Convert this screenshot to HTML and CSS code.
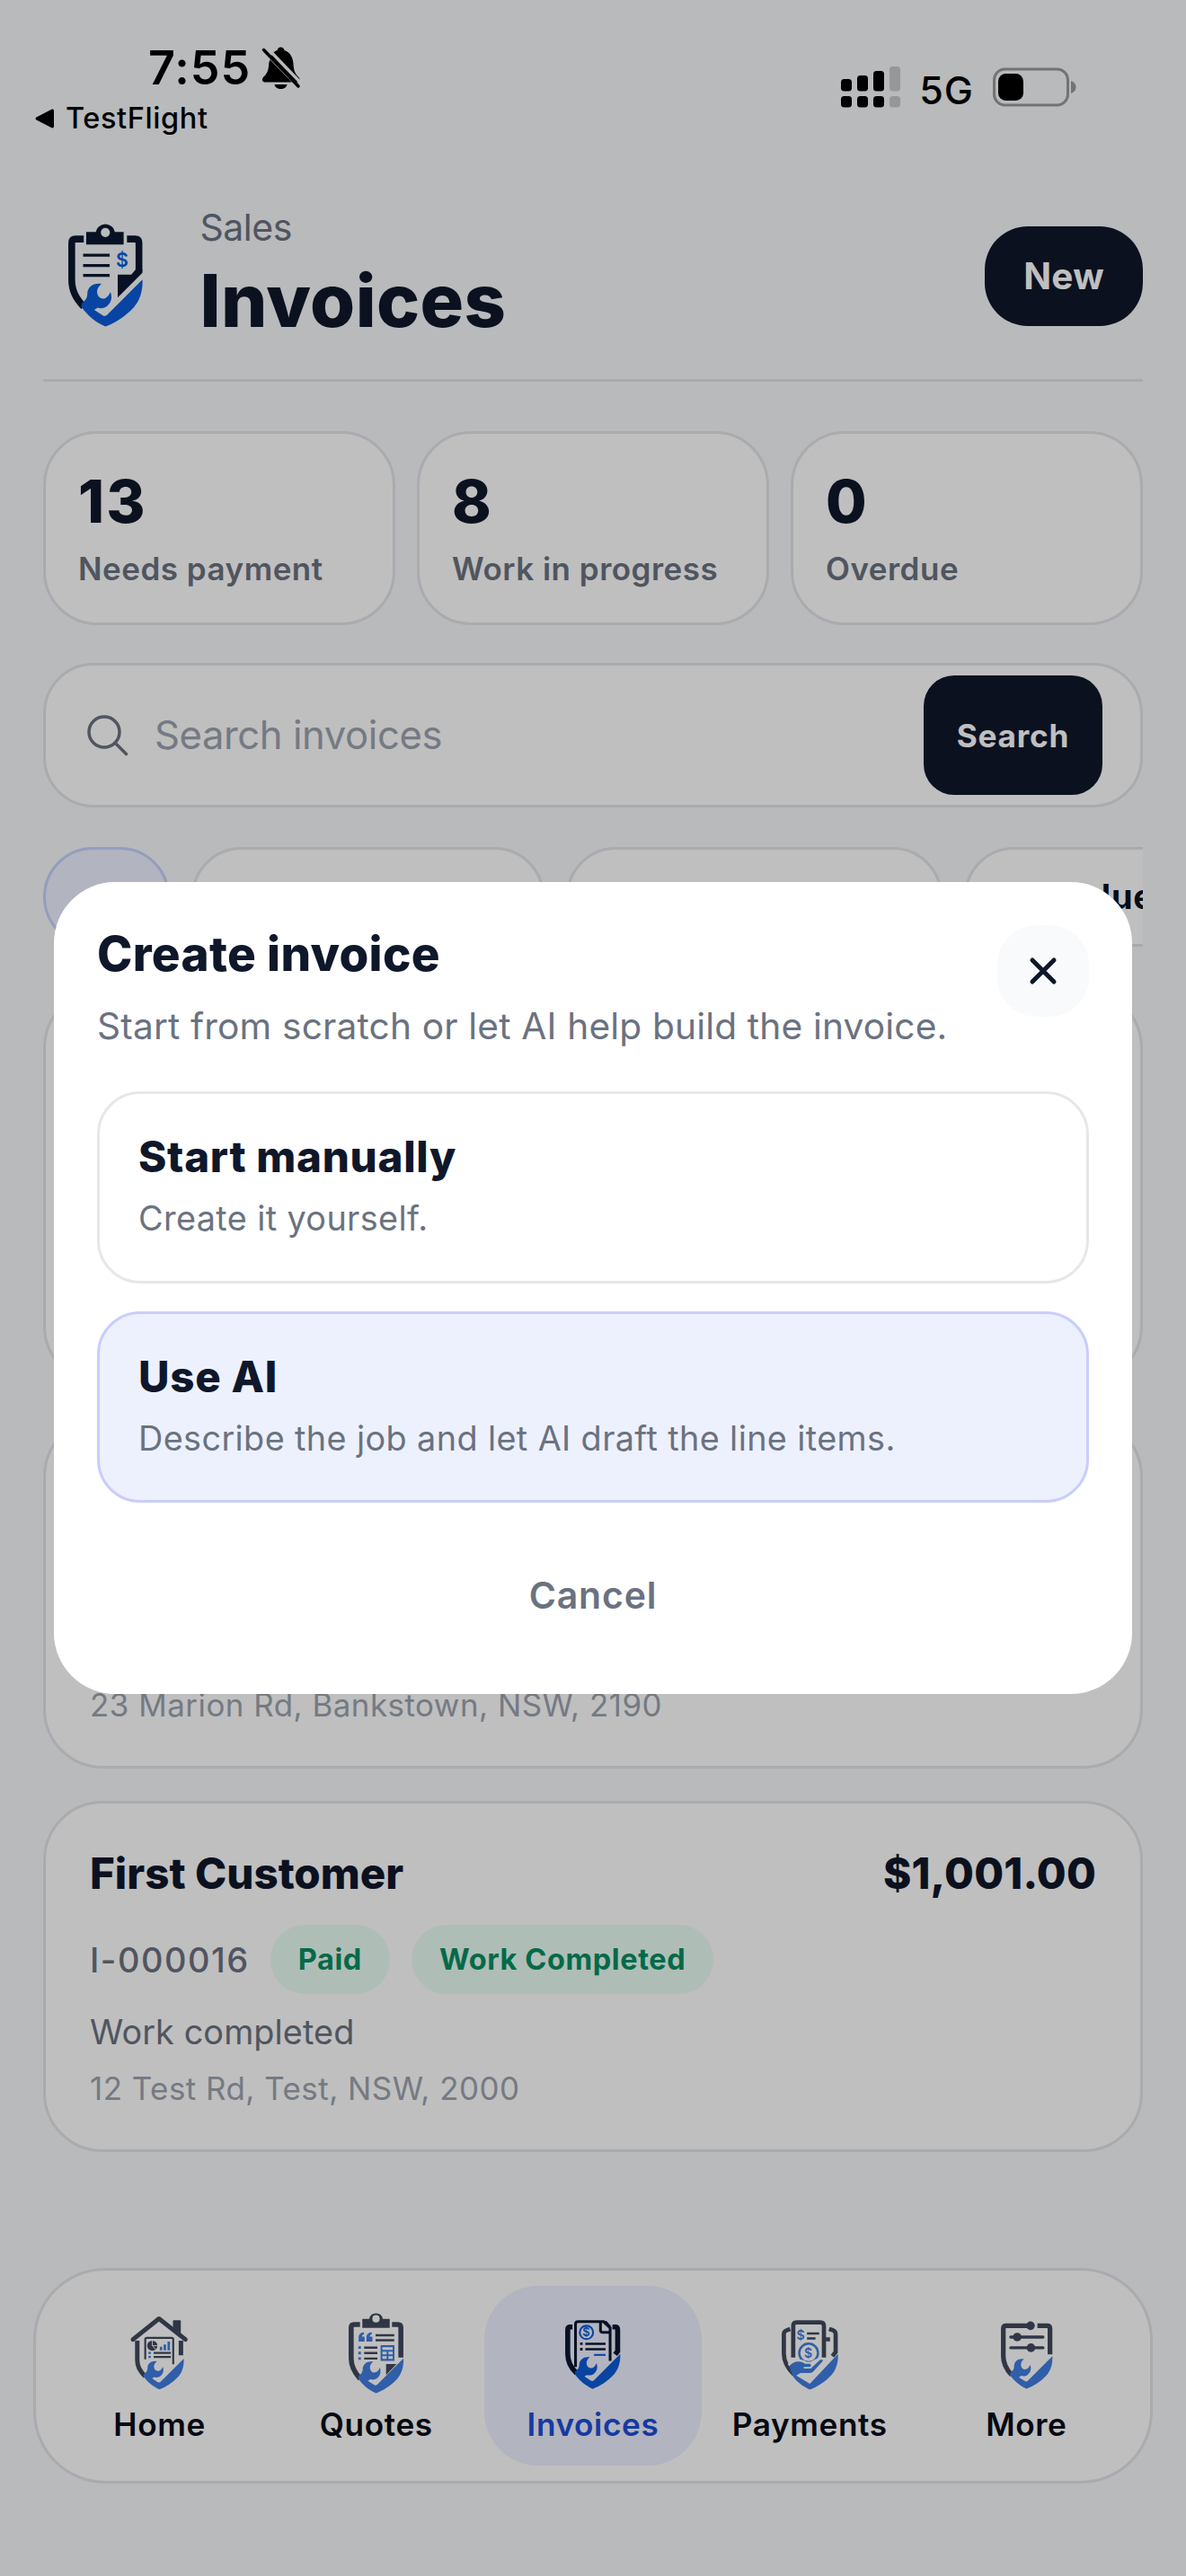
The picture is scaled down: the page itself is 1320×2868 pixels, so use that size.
FILE: index.html
```html
<!DOCTYPE html>
<html lang="en">
<head>
<meta charset="utf-8">
<title>Invoices</title>
<link rel="stylesheet" href="styles.css">
</head>
<body>
<svg class="defs" aria-hidden="true">
  <defs>
    <path id="swoosh" d="M60 0C60.5 9 58 17 53 22.500C46 30 38 35 30 38C22 34.500 16 29.500 10.500 22L11 19C14 17 15.400 15 15.400 12C15.400 6 20 2.500 26.800 3.400C24 6 22.800 8.500 23.500 11.500C24.300 14.500 27 16.300 30 15C32.200 14 33.300 12 34.100 10C36 15 34.500 19 31.300 21.600C28.500 23.500 26 23.400 23.800 22.800L21 24.500L28 29C29 29.800 30.500 29.500 31.500 28.500Z"/>
  </defs>
</svg>
<div class="screen">
  <header class="status">
    <div class="status-left">
      <div class="clock">7:55
        <svg class="bell" width="44" height="48" viewBox="0 0 44 48">
          <path d="M9.500 14.500C11 8.500 14 5 17.500 4C18 1.500 20 .5 21.500 .5S25 1.500 25.500 4C32 6 35 12 35.500 19C36 28 38 30.500 41.500 34C43.500 37 42.500 39.500 39 39.500H4.500C1 39.500 0 37 2 34C6.500 30 8 26 8.300 18Z"/>
          <path d="M14.500 42H28.500C28 45.500 25 47 21.500 47S15 45.500 14.500 42Z"/>
          <path class="slash-gap" d="M2 4L42 45.500M6 1L46 42.500"/>
          <path class="slash" d="M2.500 3.500L41 44"/>
        </svg>
      </div>
      <div class="back">
        <svg width="22" height="22" viewBox="0 0 22 22"><path d="M1.500 9.500L18.500 .8Q21 0 21 2.500V19.500Q21 22 18.500 21.200L1.500 12.500Q-.5 11 1.500 9.500Z"/></svg>
        TestFlight
      </div>
    </div>
    <div class="status-right">
      <svg width="67" height="46" viewBox="0 0 67 46">
        <g fill="#000"><rect x="0" y="14" width="12" height="13.500" rx="3.500"/><rect x="18" y="10" width="12" height="17.500" rx="3.500"/><rect x="36" y="5" width="12" height="22.500" rx="3.500"/><rect x="0" y="33" width="12" height="12.500" rx="3.500"/><rect x="18" y="33" width="12" height="12.500" rx="3.500"/><rect x="36" y="33" width="12" height="12.500" rx="3.500"/></g>
        <g class="dim"><rect x="54" y="0" width="12" height="27.500" rx="3.500"/><rect x="54" y="33" width="12" height="12.500" rx="3.500"/></g>
      </svg>
      <span class="network">5G</span>
      <svg class="battery" width="94" height="44" viewBox="0 0 94 44">
        <rect class="shell" x="1.500" y="2" width="82" height="40" rx="12"/>
        <rect x="6" y="7" width="28" height="30" rx="8.500"/>
        <path class="dim-dark" d="M87 15Q92.500 17 92.500 22T87 29Z"/>
      </svg>
    </div>
  </header>

  <main class="content">
    <section class="header">
      <svg class="logo" width="82.500" height="115.500" viewBox="0 -46 60 84">
        <g class="navy-line"><path d="M12.500 -32.800H6Q2.800 -32.800 2.800 -29.600V0C2.800 9 6 15 12.500 22"/><path d="M47.500 -32.800H54Q57.200 -32.800 57.200 -29.600V-7"/></g>
        <path class="navy" fill-rule="evenodd" d="M14.500 -38.500H22.400A7.700 7.700 0 0 1 37.600 -38.500H44.800V-28.400H14.500ZM30 -41.800A3.700 3.700 0 1 0 30 -34.400A3.700 3.700 0 1 0 30 -41.800Z"/>
        <path class="navy" d="M40 -4H51L54.400 -8H60V-5.500L40 14.500Z"/>
        <path class="thin" d="M12 -19.800H33.500M12 -11.400H33.500M12 -3.400H33.500"/>
        <text class="dollar" x="43.500" y="-10.500" font-size="15.500">$</text>
        <use class="blue" href="#swoosh"/>
      </svg>
      <div class="titles">
        <div class="eyebrow">Sales</div>
        <h1>Invoices</h1>
      </div>
      <button class="new">New</button>
    </section>

    <section class="stats">
      <div class="stat"><b>13</b><span>Needs payment</span></div>
      <div class="stat"><b>8</b><span>Work in progress</span></div>
      <div class="stat"><b>0</b><span>Overdue</span></div>
    </section>

    <section class="search">
      <svg width="48" height="48" viewBox="0 0 48 48"><circle cx="20" cy="20" r="17"/><path d="M32 32L44.500 44.500"/></svg>
      <span class="placeholder">Search invoices</span>
      <button>Search</button>
    </section>

    <section class="filters">
      <div class="filter all"></div>
      <div class="filter pending"></div>
      <div class="filter progress"></div>
      <div class="filter overdue">Overdue</div>
    </section>

    <section class="cards">
      <article class="card tall"></article>
      <article class="card"><div class="address">23 Marion Rd, Bankstown, NSW, 2190</div></article>
      <article class="card">
        <div class="card-top"><h2>First Customer</h2><h2 class="amount">$1,001.00</h2></div>
        <div class="tags"><span class="number">I-000016</span><span class="tag">Paid</span><span class="tag">Work Completed</span></div>
        <div class="summary">Work completed</div>
        <div class="address">12 Test Rd, Test, NSW, 2000</div>
      </article>
    </section>
  </main>

  <nav class="tabs">
    <a class="tab">
      <svg width="68.800" height="83.300" viewBox="-8 -54 76 92">
        <g class="navy-line"><path d="M2.800 -22V2C2.800 10 6 15 12.500 22"/><path d="M56.500 -22V-4"/><path class="round" d="M-2.500 -23.500L29.500 -49L62 -23.500"/></g>
        <path class="navy" d="M46.700 -46Q46.700 -47 47.700 -47H55.300Q56.300 -47 56.300 -46V-25L46.700 -33Z"/>
        <path class="thin" d="M12.600 1V-23.500Q12.600 -25.500 14.600 -25.500H45Q47 -25.500 47 -23.500V7M23 -7H44M23 -2H44"/>
        <circle class="navy" cx="21.300" cy="-15.800" r="6.300"/><path class="cut" d="M21.300 -22.500V-15.800H28M21.300 -15.800L26 -11"/>
        <path class="bluefill" d="M30.500 -14.400H33.500V-10H30.500ZM35.200 -17.300H38.200V-10H35.200ZM40 -21H43V-10H40ZM16.500 -8.300H19.500V-5.700H16.500ZM16.500 -3.300H19.500V-.7H16.500Z"/>
        <use class="blue" href="#swoosh"/>
      </svg>
      <span>Home</span>
    </a>
    <a class="tab">
      <svg class="drop" width="61" height="90.500" viewBox="0 -51 60 89">
        <g class="navy-line"><path d="M12.500 -37.200H6Q2.800 -37.200 2.800 -34V0C2.800 9 6 15 12.500 22"/><path d="M47.500 -37.200H54Q57.200 -37.200 57.200 -34V-1"/></g>
        <path class="navy" fill-rule="evenodd" d="M15 -43.500H22.500A7.700 7.700 0 0 1 37.500 -43.500H45V-33.500H15ZM30 -47.500A4 4 0 1 0 30 -39.500A4 4 0 1 0 30 -47.500Z"/>
        <path class="navy" d="M41 6H52.500L41 18Z"/>
        <path class="thin" d="M29.500 -25.500H50M29.500 -20H50M17 -12H31.500M17 -6H31.500M17 0H31.500"/>
        <path class="bluefill" d="M11 -23.500Q11 -28 16.500 -29L17 -27Q14.500 -26 14.500 -24H17.500V-18.500H11ZM19.500 -23.500Q19.500 -28 25 -29L25.500 -27Q23 -26 23 -24H26V-18.500H19.500ZM10.700 -13.400H13.500V-10.600H10.700ZM10.700 -7.400H13.500V-4.600H10.700ZM10.700 -1.400H13.500V1.400H10.700Z"/>
        <path class="blueline" d="M36 -13.500H49.200V1.500H36ZM36 -8.500H49.200M36 -3.500H49.200M42.600 -8.500V1.500"/>
        <use class="blue" href="#swoosh"/>
      </svg>
      <span>Quotes</span>
    </a>
    <a class="tab active">
      <svg width="61.300" height="77.700" viewBox="0 -38 60 76">
        <g class="navy-line"><path d="M8 -29.500H5.500Q2.800 -29.500 2.800 -26.500V0C2.800 9 6 15 12.500 21"/><path d="M51.500 -29.500H54.500Q57.200 -29.500 57.200 -26.500V-3L54.500 .5"/></g>
        <path class="doc" d="M11.300 14V-32.500Q11.300 -35.300 14.200 -35.300H42L49 -28.500V7.500M38.500 -35V-26Q38.500 -23.500 41 -23.500H49"/>
        <path class="navy" d="M40 -35L49.500 -26.500V-31L45 -36Z"/>
        <circle class="blueline" cx="23.200" cy="-23.500" r="7.300"/>
        <text class="dollar" x="23.200" y="-19" font-size="12.500">$</text>
        <path class="thin" d="M22 -11.200H44M22 -5.200H44"/>
        <path class="navy" d="M16.300 -12.600H19V-9.800H16.300ZM16.300 -6.600H19V-3.800H16.300Z"/>
        <path class="blueline" d="M31.500 1H44"/>
        <use class="blue" href="#swoosh"/>
      </svg>
      <span>Invoices</span>
    </a>
    <a class="tab">
      <svg width="62.700" height="79.400" viewBox="0 -38 60 76">
        <g class="navy-line four"><path d="M9 -26.500L5 -25Q2.300 -24 2.300 -21V0C2.300 9 6 15 13 22"/><path d="M50.500 -26.500L55 -25Q57.500 -24 57.500 -21V-2L54 2.500M47 -15.500H51.500"/><path d="M12.300 4V-30Q12.300 -33.500 16 -33.500H41Q45 -33.500 45 -30V4"/></g>
        <text class="dollar" x="20.500" y="-15" font-size="13.500">$</text>
        <path class="thin" d="M27 -21.800H40M27 -16.500H36"/>
        <circle class="blueline wide" cx="28.700" cy="-1" r="10"/>
        <text class="dollar" x="28.700" y="3.700" font-size="13.500">$</text>
        <path class="hand-gap" d="M8 13Q14 8 20 8.500Q24 9 26 11H31L41 6"/>
        <path class="blue" d="M8 13.500C12 8 18 7.500 22 9L25 10.500H30Q32.500 12 30 14H23.500V15.500H31L40.500 6.800Q43.500 5 44 7.500L34 18.500Q32.500 20.300 30 20.300H20L15.500 23L30 32L60 0C60.500 9 58 17 53 22.500C46 30 38 35 30 38C22 34.500 16 29.500 12 24Z"/>
      </svg>
      <span>Payments</span>
    </a>
    <a class="tab">
      <svg width="57.300" height="74.600" viewBox="0 -40 60 78">
        <g class="navy-line"><path d="M34 -35.500H6Q2.800 -35.500 2.800 -32.300V0C2.800 9 6 15 12.500 22"/><path d="M42.500 -35.500H54Q57.200 -35.500 57.200 -32.300V-2"/></g>
        <path class="thin mid" d="M11.500 -22.300H49M11.500 -9.800H49"/>
        <g class="navy"><circle cx="34.500" cy="-35.500" r="5"/><circle cx="19" cy="-22.300" r="5"/><circle cx="35" cy="-9.800" r="5"/></g>
        <use class="blue" href="#swoosh"/>
      </svg>
      <span>More</span>
    </a>
  </nav>

  <div class="scrim"></div>
  <div class="modal" role="dialog">
    <div class="modal-head">
      <div class="modal-titles">
        <h3>Create invoice</h3>
        <p>Start from scratch or let AI help build the invoice.</p>
      </div>
      <button class="close"><svg width="34" height="34" viewBox="0 0 34 34"><path d="M5 5L29 29M29 5L5 29"/></svg></button>
    </div>
    <div class="options">
      <div class="option"><h4>Start manually</h4><p>Create it yourself.</p></div>
      <div class="option ai"><h4>Use AI</h4><p>Describe the job and let AI draft the line items.</p></div>
    </div>
    <button class="cancel">Cancel</button>
  </div>
</div>
</body>
</html>
```
FILE: styles.css
```css
* { box-sizing: border-box; margin: 0; padding: 0; }
body { font-family: Inter, "Liberation Sans", sans-serif; color: #0f172a; background: #f6f8fb; }
button { font-family: inherit; border: 0; }
svg { display: block; flex: none; }
.defs { position: absolute; width: 0; height: 0; }

.screen { position: relative; width: 1320px; height: 2868px; overflow: hidden; background: #f6f8fb; display: flex; flex-direction: column; white-space: nowrap; }

/* status bar */
.status { height: 227px; flex: none; display: flex; justify-content: space-between; color: #000; }
.status-left { padding-top: 48px; }
.clock { margin-left: 165px; height: 56px; display: flex; gap: 12px; font-size: 52px; line-height: 56px; font-weight: 600; letter-spacing: 1px; }
.bell { margin-top: 4px; }
.slash-gap { stroke: #f6f8fb; stroke-width: 3.500; }
.slash { stroke: #000; stroke-width: 3.500; stroke-linecap: round; }
.back { margin: 8px 0 0 39px; display: flex; align-items: center; gap: 12px; font-size: 32.500px; line-height: 40px; font-weight: 500; letter-spacing: .6px; }
.status-right { display: flex; align-items: flex-start; padding: 74px 121px 0 0; }
.network { margin: 4px 21px 0 20px; font-size: 43px; line-height: 44px; font-weight: 500; letter-spacing: 1px; }
.battery { margin-top: 1px; }
.dim { fill: #c9cacc; }
.shell { fill: none; stroke: #989a9c; stroke-width: 3; }
.dim-dark { fill: #989a9c; }

.content { padding: 0 48px; }

/* page header */
.header { display: flex; align-items: flex-start; height: 198px; border-bottom: 3px solid #e3e5e9; }
.logo { margin: 21px 64px 0 28px; }
.titles { flex: 1; }
.eyebrow { font-size: 41px; line-height: 52px; letter-spacing: -.5px; color: #6b7280; }
h1 { margin-top: 12px; font-size: 81px; line-height: 88px; font-weight: 800; letter-spacing: .36px; }
.new { margin-top: 25px; width: 176px; height: 111px; border-radius: 48px; background: #0f172a; color: #fff; font-size: 40.500px; font-weight: 700; letter-spacing: .28px; }

/* stats */
.stats { margin-top: 55px; display: grid; grid-template-columns: repeat(3, 1fr); gap: 24px; }
.stat { height: 216px; padding: 39px 36px; border: 3px solid #e3e5e9; border-radius: 60px; background: #fff; display: flex; flex-direction: column; }
.stat b { font-size: 66px; line-height: 72px; font-weight: 800; letter-spacing: 2px; }
.stat span { margin-top: 17px; font-size: 35px; line-height: 44px; font-weight: 600; letter-spacing: .500px; color: #6b7280; }

/* search */
.search { margin-top: 42px; height: 161px; padding: 0 42px 0 45px; border: 3px solid #e3e5e9; border-radius: 56px; background: #fff; display: flex; align-items: center; }
.search svg { fill: none; stroke: #6b7280; stroke-width: 3.500; stroke-linecap: round; }
.placeholder { flex: 1; margin-left: 28px; font-size: 43.600px; letter-spacing: -.42px; color: #9ca3af; }
.search button { width: 199px; height: 133px; border-radius: 34px; background: #0f172a; color: #fff; font-size: 35.200px; font-weight: 700; letter-spacing: .800px; }

/* filters */
.filters { margin-top: 44px; display: flex; gap: 24px; overflow: hidden; }
.filter { flex: none; height: 111px; border: 3px solid #e3e5e9; border-radius: 56px; background: #fff; font-size: 37.800px; line-height: 105px; font-weight: 700; letter-spacing: .8px; color: #0b1020; }
.all { width: 141px; background: #eef0ff; border-color: #c7d2fe; }
.pending { width: 393px; }
.progress { width: 419px; }
.overdue { width: 260px; padding-left: 45px; }

/* invoice cards */
.cards { margin-top: 47px; display: flex; flex-direction: column; gap: 36px; }
.card { height: 391px; padding: 48px 49px 44px; border: 3px solid #e3e5e9; border-radius: 66px; background: #fff; display: flex; flex-direction: column; }
.card.tall { height: 441px; }
.card-top { display: flex; justify-content: space-between; }
h2 { font-size: 47.500px; line-height: 60px; font-weight: 800; letter-spacing: 0; }
.amount { letter-spacing: .2px; }
.tags { margin-top: 27px; display: flex; align-items: center; gap: 24px; }
.number { margin-right: -1px; font-size: 38px; font-weight: 500; letter-spacing: 1.500px; color: #6b7280; }
.tag { height: 77px; padding: 0 31px; border-radius: 39px; background: #eafcf4; color: #058e60; font-size: 32.500px; line-height: 77px; font-weight: 700; letter-spacing: .600px; }
.summary { margin-top: 16px; font-size: 37.800px; line-height: 52px; letter-spacing: .1px; color: #6b7280; }
.address { margin-top: auto; font-size: 34.900px; line-height: 48px; letter-spacing: .5px; color: #9ca3af; }

/* tab bar */
.tabs { margin: 129px 37px 0; height: 240px; flex: none; padding: 17px; border: 3px solid #e3e5e9; border-radius: 80px; background: #fff; display: grid; grid-template-columns: repeat(5, 1fr); }
.tab { display: flex; flex-direction: column; align-items: center; justify-content: flex-end; padding-bottom: 24px; border-radius: 60px; font-size: 35.200px; line-height: 44px; font-weight: 600; letter-spacing: .6px; color: #080c18; }
.tab span { margin-top: 17px; }
.tab svg { opacity: .78; overflow: visible; }
.tab .drop { margin-bottom: -4px; }
.tab.active { background: #eef0ff; color: #1d4ed8; }
.tab.active svg { opacity: 1; }
.navy { fill: #0b1730; }
.navy-line { fill: none; stroke: #0b1730; stroke-width: 5.500; }
.navy-line.four { stroke-width: 4.500; }
.round { stroke-linecap: round; stroke-linejoin: round; }
.thin { fill: none; stroke: #0b1730; stroke-width: 2.400; }
.thin.mid { stroke-width: 3.600; stroke-linecap: round; }
.doc { fill: none; stroke: #0b1730; stroke-width: 3; }
.blue, .bluefill, .dollar { fill: #0b5bd8; }
.blueline { fill: none; stroke: #0b5bd8; stroke-width: 2; }
.blueline.wide { stroke-width: 2.400; }
.cut { fill: none; stroke: #fff; stroke-width: 1; }
.hand-gap { fill: none; stroke: #fff; stroke-width: 5; }
.dollar { font-weight: 600; text-anchor: middle; }

/* dialog */
.scrim { position: absolute; inset: 0; background: rgba(0, 0, 0, .25); }
.modal { position: absolute; left: 60px; right: 60px; top: 982px; height: 904px; padding: 48px; border-radius: 68px; background: #fff; display: flex; flex-direction: column; }
.modal-head { display: flex; justify-content: space-between; }
h3 { font-size: 53px; line-height: 64px; font-weight: 800; letter-spacing: .32px; }
.modal-titles p { margin-top: 21px; font-size: 40.700px; line-height: 56px; letter-spacing: .15px; color: #6b7280; }
.close { width: 102px; height: 102px; border-radius: 44px; background: #f8fafc; display: flex; align-items: center; justify-content: center; }
.close path { stroke: #0f172a; stroke-width: 5; stroke-linecap: round; }
.options { margin-top: 44px; display: flex; flex-direction: column; gap: 31px; }
.option { height: 213.500px; padding: 40px 43px; border: 3px solid #e5e7eb; border-radius: 48px; }
.option.ai { background: #edf1fe; border-color: #c9cdfb; }
h4 { font-size: 47.500px; line-height: 60px; font-weight: 800; letter-spacing: .700px; }
.option p { margin-top: 12px; font-size: 37.800px; line-height: 52px; letter-spacing: .38px; color: #6b7280; }
.cancel { margin-top: 43px; height: 120px; background: none; font-size: 41px; font-weight: 600; letter-spacing: .8px; color: #6b7280; }
```
